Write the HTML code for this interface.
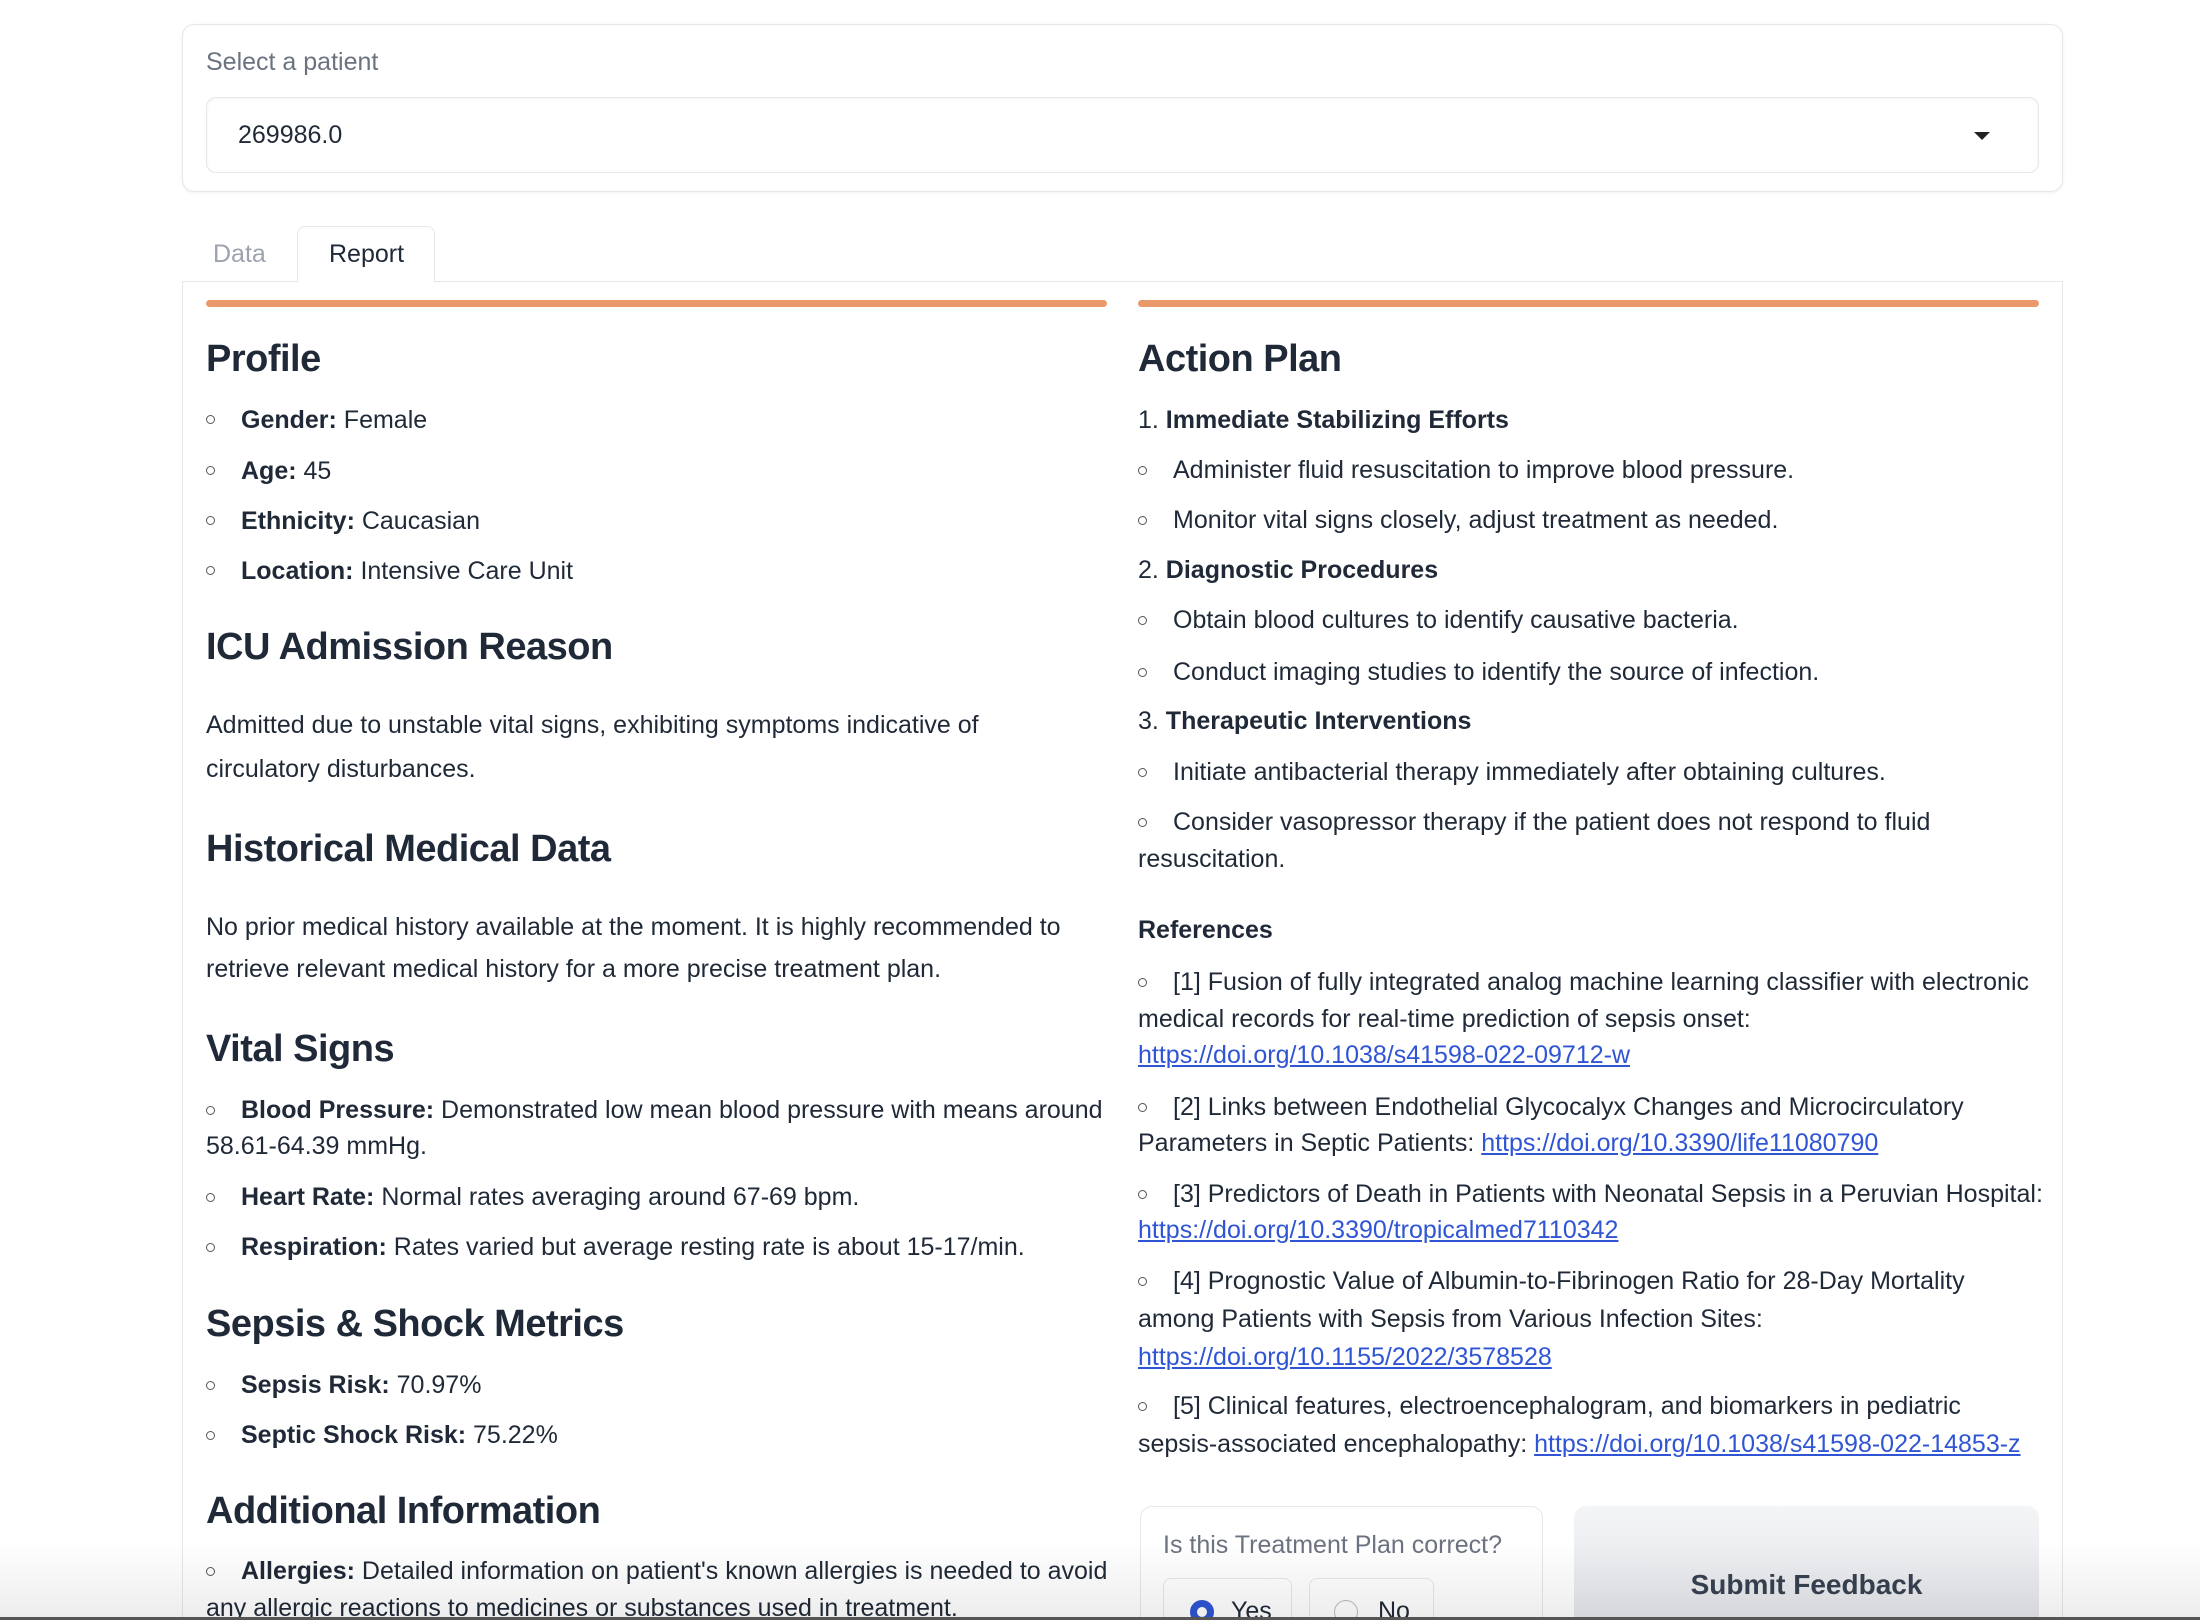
<!DOCTYPE html>
<html style="width:2200px;height:1620px;overflow:hidden"><head><meta charset="utf-8"><style>
*{margin:0;padding:0;box-sizing:border-box}
body{width:2200px;height:1620px;background:#fff;position:relative;overflow:hidden;font-family:"Liberation Sans",sans-serif;color:#1f2937}
.a{position:absolute;white-space:nowrap}
.t{font-size:25px;line-height:30px}
.h{font-size:38px;line-height:44px;font-weight:bold;letter-spacing:-0.5px;color:#1f2937}
.b{position:absolute;width:9px;height:9px;border:1.5px solid #555;border-radius:50%}
b{font-weight:bold}
a{color:#2f55d4;text-decoration:underline}
</style></head><body>
<div class="a" style="left:182px;top:24px;width:1881px;height:168px;border:1px solid #e5e7eb;border-radius:12px;box-shadow:0 1px 3px rgba(0,0,0,.06)"></div>
<div class="a t" style="left:206px;top:47px;color:#6b7280">Select a patient</div>
<div class="a" style="left:206px;top:97px;width:1833px;height:76px;border:1px solid #e5e7eb;border-radius:10px;box-shadow:inset 0 1px 3px rgba(0,0,0,.05)"></div>
<div class="a t" style="left:238px;top:120px">269986.0</div>
<div class="a" style="left:1974px;top:132px;width:0;height:0;border-left:8px solid transparent;border-right:8px solid transparent;border-top:8px solid #222"></div>

<div class="a" style="left:182px;top:281px;width:1881px;height:1339px;border:1px solid #e5e7eb;border-bottom:none"></div>
<div class="a" style="left:297px;top:226px;width:138px;height:57px;border:1px solid #e5e7eb;border-bottom:none;border-radius:8px 8px 0 0;background:#fff"></div>
<div class="a t" style="left:213px;top:239px;color:#9ca3af">Data</div>
<div class="a t" style="left:329px;top:239px">Report</div>
<div class="a" style="left:206px;top:300px;width:901px;height:7px;background:#e9996a;border-radius:4px"></div>
<div class="a" style="left:1138px;top:300px;width:901px;height:7px;background:#e9996a;border-radius:4px"></div>

<!-- Left -->
<div class="a h" style="left:206px;top:337px">Profile</div>
<div class="b" style="left:206px;top:415px"></div><div class="a t" style="left:241px;top:405px"><b>Gender:</b> Female</div>
<div class="b" style="left:206px;top:466px"></div><div class="a t" style="left:241px;top:456px"><b>Age:</b> 45</div>
<div class="b" style="left:206px;top:516px"></div><div class="a t" style="left:241px;top:506px"><b>Ethnicity:</b> Caucasian</div>
<div class="b" style="left:206px;top:566px"></div><div class="a t" style="left:241px;top:556px"><b>Location:</b> Intensive Care Unit</div>
<div class="a h" style="left:206px;top:625px">ICU Admission Reason</div>
<div class="a t" style="left:206px;top:710px">Admitted due to unstable vital signs, exhibiting symptoms indicative of</div>
<div class="a t" style="left:206px;top:754px">circulatory disturbances.</div>
<div class="a h" style="left:206px;top:827px">Historical Medical Data</div>
<div class="a t" style="left:206px;top:912px">No prior medical history available at the moment. It is highly recommended to</div>
<div class="a t" style="left:206px;top:954px">retrieve relevant medical history for a more precise treatment plan.</div>
<div class="a h" style="left:206px;top:1027px">Vital Signs</div>
<div class="b" style="left:206px;top:1106px"></div><div class="a t" style="left:241px;top:1095px"><b>Blood Pressure:</b> Demonstrated low mean blood pressure with means around</div>
<div class="a t" style="left:206px;top:1131px">58.61-64.39 mmHg.</div>
<div class="b" style="left:206px;top:1193px"></div><div class="a t" style="left:241px;top:1182px"><b>Heart Rate:</b> Normal rates averaging around 67-69 bpm.</div>
<div class="b" style="left:206px;top:1243px"></div><div class="a t" style="left:241px;top:1232px"><b>Respiration:</b> Rates varied but average resting rate is about 15-17/min.</div>
<div class="a h" style="left:206px;top:1302px">Sepsis &amp; Shock Metrics</div>
<div class="b" style="left:206px;top:1381px"></div><div class="a t" style="left:241px;top:1370px"><b>Sepsis Risk:</b> 70.97%</div>
<div class="b" style="left:206px;top:1431px"></div><div class="a t" style="left:241px;top:1420px"><b>Septic Shock Risk:</b> 75.22%</div>
<div class="a h" style="left:206px;top:1489px">Additional Information</div>
<div class="b" style="left:206px;top:1567px"></div><div class="a t" style="left:241px;top:1556px"><b>Allergies:</b> Detailed information on patient's known allergies is needed to avoid</div>
<div class="a t" style="left:206px;top:1593px">any allergic reactions to medicines or substances used in treatment.</div>

<!-- Right -->
<div class="a h" style="left:1138px;top:337px">Action Plan</div>
<div class="a t" style="left:1138px;top:405px">1. <b>Immediate Stabilizing Efforts</b></div>
<div class="b" style="left:1138px;top:466px"></div><div class="a t" style="left:1173px;top:455px">Administer fluid resuscitation to improve blood pressure.</div>
<div class="b" style="left:1138px;top:516px"></div><div class="a t" style="left:1173px;top:505px">Monitor vital signs closely, adjust treatment as needed.</div>
<div class="a t" style="left:1138px;top:555px">2. <b>Diagnostic Procedures</b></div>
<div class="b" style="left:1138px;top:616px"></div><div class="a t" style="left:1173px;top:605px">Obtain blood cultures to identify causative bacteria.</div>
<div class="b" style="left:1138px;top:668px"></div><div class="a t" style="left:1173px;top:657px">Conduct imaging studies to identify the source of infection.</div>
<div class="a t" style="left:1138px;top:706px">3. <b>Therapeutic Interventions</b></div>
<div class="b" style="left:1138px;top:768px"></div><div class="a t" style="left:1173px;top:757px">Initiate antibacterial therapy immediately after obtaining cultures.</div>
<div class="b" style="left:1138px;top:818px"></div><div class="a t" style="left:1173px;top:807px">Consider vasopressor therapy if the patient does not respond to fluid</div>
<div class="a t" style="left:1138px;top:844px">resuscitation.</div>
<div class="a t" style="left:1138px;top:915px;font-weight:bold">References</div>
<div class="b" style="left:1138px;top:978px"></div><div class="a t" style="left:1173px;top:967px">[1] Fusion of fully integrated analog machine learning classifier with electronic</div>
<div class="a t" style="left:1138px;top:1004px">medical records for real-time prediction of sepsis onset:</div>
<div class="a t" style="left:1138px;top:1040px"><a>https://doi.org/10.1038/s41598-022-09712-w</a></div>
<div class="b" style="left:1138px;top:1103px"></div><div class="a t" style="left:1173px;top:1092px">[2] Links between Endothelial Glycocalyx Changes and Microcirculatory</div>
<div class="a t" style="left:1138px;top:1128px">Parameters in Septic Patients: <a>https://doi.org/10.3390/life11080790</a></div>
<div class="b" style="left:1138px;top:1190px"></div><div class="a t" style="left:1173px;top:1179px">[3] Predictors of Death in Patients with Neonatal Sepsis in a Peruvian Hospital:</div>
<div class="a t" style="left:1138px;top:1215px"><a>https://doi.org/10.3390/tropicalmed7110342</a></div>
<div class="b" style="left:1138px;top:1277px"></div><div class="a t" style="left:1173px;top:1266px">[4] Prognostic Value of Albumin-to-Fibrinogen Ratio for 28-Day Mortality</div>
<div class="a t" style="left:1138px;top:1304px">among Patients with Sepsis from Various Infection Sites:</div>
<div class="a t" style="left:1138px;top:1342px"><a>https://doi.org/10.1155/2022/3578528</a></div>
<div class="b" style="left:1138px;top:1402px"></div><div class="a t" style="left:1173px;top:1391px">[5] Clinical features, electroencephalogram, and biomarkers in pediatric</div>
<div class="a t" style="left:1138px;top:1429px">sepsis-associated encephalopathy: <a>https://doi.org/10.1038/s41598-022-14853-z</a></div>

<div class="a" style="left:1140px;top:1506px;width:403px;height:114px;border:1px solid #e5e7eb;border-bottom:none;border-radius:12px 12px 0 0"></div>
<div class="a t" style="left:1163px;top:1530px;color:#6b7280">Is this Treatment Plan correct?</div>
<div class="a" style="left:1163px;top:1578px;width:129px;height:42px;border:1px solid #e5e7eb;border-bottom:none;border-radius:8px 8px 0 0"></div>
<div class="a" style="left:1309px;top:1578px;width:125px;height:42px;border:1px solid #e5e7eb;border-bottom:none;border-radius:8px 8px 0 0"></div>
<div class="a" style="left:1190px;top:1600px;width:24px;height:24px;border-radius:50%;border:7px solid #2f55d4;background:#fff"></div>
<div class="a t" style="left:1231px;top:1596px">Yes</div>
<div class="a" style="left:1334px;top:1600px;width:24px;height:24px;border-radius:50%;border:1.5px solid #bbb"></div>
<div class="a t" style="left:1378px;top:1596px">No</div>
<div class="a" style="left:1574px;top:1506px;width:465px;height:114px;border-radius:12px 12px 0 0;background:linear-gradient(#f3f4f6,#e5e7eb)"></div>
<div class="a" style="left:1574px;top:1568px;width:465px;text-align:center;font-size:28px;line-height:34px;font-weight:bold;color:#374151">Submit Feedback</div>

<div class="a" style="left:0;top:1540px;width:2200px;height:77px;background:linear-gradient(rgba(0,0,0,0),rgba(0,0,0,.07))"></div>
<div class="a" style="left:0;top:1617px;width:2200px;height:3px;background:#555"></div>
</body></html>
